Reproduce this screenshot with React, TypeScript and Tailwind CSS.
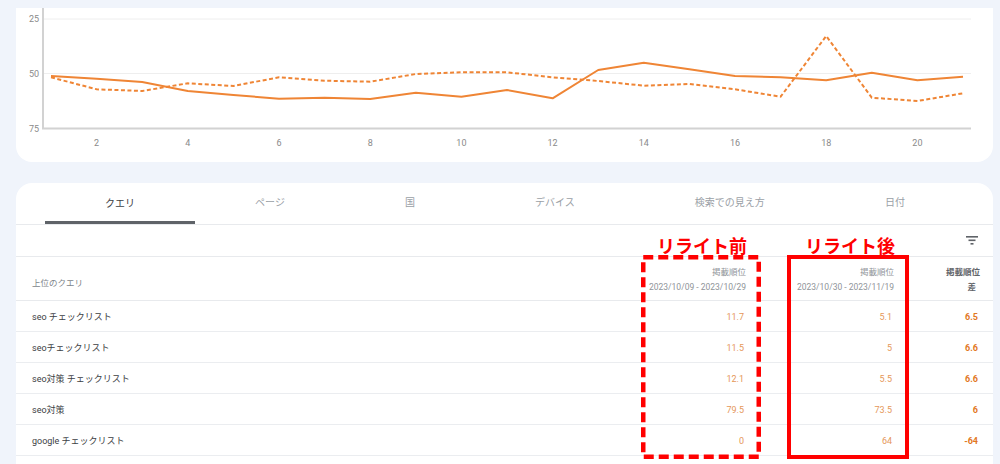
import { useMemo } from "react";

const solid = [76, 78.7, 82, 91, 95, 98.7, 97.7, 99, 92.7, 96.7, 90, 98.3, 70, 62.7, 69.3, 76, 77.3, 80.3, 72.7, 80.3, 76.7];
const dashed = [77.3, 89.3, 91, 83.3, 86, 77.3, 80.7, 81.7, 74, 72.3, 72.3, 77.3, 81, 85.7, 84, 89.3, 96.7, 36, 97.7, 101, 93.3];

const dayX = (i: number) => 51 + i * 45.6;

const tabs = ["クエリ", "ページ", "国", "デバイス", "検索での見え方", "日付"];

const rows = [
  { q: "seo チェックリスト", a: "11.7", b: "5.1", d: "6.5" },
  { q: "seoチェックリスト", a: "11.5", b: "5", d: "6.6" },
  { q: "seo対策 チェックリスト", a: "12.1", b: "5.5", d: "6.6" },
  { q: "seo対策", a: "79.5", b: "73.5", d: "6" },
  { q: "google チェックリスト", a: "0", b: "64", d: "-64" },
];

const Chart = () => {
  const solidPts = useMemo(() => solid.map((y, i) => `${dayX(i)},${y}`).join(" "), []);
  const dashedPts = useMemo(() => dashed.map((y, i) => `${dayX(i)},${y}`).join(" "), []);

  return (
    <svg width={977} height={154} viewBox="16 8 977 154" className="block">
      <line x1={43} y1={19} x2={971} y2={19} stroke="#eeeeee" strokeWidth={1} />
      <line x1={43} y1={73.5} x2={971} y2={73.5} stroke="#eeeeee" strokeWidth={1} />
      <line x1={43} y1={8} x2={43} y2={129} stroke="#d2d2d2" strokeWidth={2} />
      <line x1={42} y1={128.5} x2={971} y2={128.5} stroke="#d2d2d2" strokeWidth={2} />
      <g fontFamily="Roboto, sans-serif" fontSize={9} fill="#8a8a8a">
        <text x={39} y={22} textAnchor="end">25</text>
        <text x={39} y={77} textAnchor="end">50</text>
        <text x={39} y={132} textAnchor="end">75</text>
        {[2, 4, 6, 8, 10, 12, 14, 16, 18, 20].map((d) => (
          <text key={d} x={dayX(d - 1)} y={145.5} textAnchor="middle">
            {d}
          </text>
        ))}
      </g>
      <polyline points={dashedPts} fill="none" stroke="#ef8535" strokeWidth={2} strokeDasharray="4 2.5" />
      <polyline points={solidPts} fill="none" stroke="#ef8535" strokeWidth={2} strokeLinejoin="round" />
    </svg>
  );
};

export default function App() {
  return (
    <div className="relative h-[464px] w-[1000px] overflow-hidden bg-[#f0f4fb] pl-4 pr-[7px] pt-2 font-[Roboto,'Noto_Sans_CJK_JP',sans-serif]">
      {/* Chart card */}
      <div className="h-[154px] rounded-b-2xl bg-white">
        <Chart />
      </div>

      {/* Table card */}
      <div className="mt-[21px] h-[300px] rounded-t-2xl bg-white">
        <div className="flex border-b border-[#e8eaed] pl-[29px] pr-[28px]">
          {tabs.map((t, i) => (
            <div
              key={t}
              className={
                i === 0
                  ? "flex h-[41px] grow items-center justify-center border-b-[3px] border-[#5f6368] pt-[3px] text-[10px] text-[#3c4043]"
                  : "flex h-[41px] grow items-center justify-center pb-[3px] text-[10px] text-[#9aa0a6]"
              }
            >
              {t}
            </div>
          ))}
        </div>

        <div className="flex h-[32px] items-center justify-end border-b border-[#e8eaed] pr-[15px]">
          <svg width={12} height={9} viewBox="0 0 12 9">
            <rect x={0} y={0} width={12} height={1.6} fill="#5f6368" />
            <rect x={2.5} y={3.5} width={7} height={1.6} fill="#5f6368" />
            <rect x={4.5} y={7} width={3} height={1.6} fill="#5f6368" />
          </svg>
        </div>

        <div className="grid h-[44px] grid-cols-[1fr_150px_148px_86px] border-b border-[#e8eaed] pl-4 pr-[13px]">
          <div className="self-center pt-[10px] text-[8.5px] text-[#80868b]">上位のクエリ</div>
          <div className="flex flex-col items-end justify-center gap-[1px] pt-[2px] text-[8.5px] leading-[14px] text-[#8f9499]">
            <span>掲載順位</span>
            <span>2023/10/09 - 2023/10/29</span>
          </div>
          <div className="flex flex-col items-end justify-center gap-[1px] pt-[2px] text-[8.5px] leading-[14px] text-[#8f9499]">
            <span>掲載順位</span>
            <span>2023/10/30 - 2023/11/19</span>
          </div>
          <div className="flex flex-col items-end justify-center gap-[1px] pt-[2px] text-[8.5px] font-bold leading-[14px] text-[#5f6368]">
            <span>掲載順位</span>
            <span className="pr-[4px]">差</span>
          </div>
        </div>

        {rows.map((r) => (
          <div
            key={r.q}
            className="grid h-[31px] grid-cols-[1fr_150px_148px_86px] items-center border-b border-[#ebedf0] pl-4 pr-[15px] pt-[3px] text-[9px]"
          >
            <div className="text-[#3c4043]">{r.q}</div>
            <div className="text-right text-[#e5975a]">{r.a}</div>
            <div className="text-right text-[#e5975a]">{r.b}</div>
            <div className="text-right font-bold text-[#e2781f]">{r.d}</div>
          </div>
        ))}
      </div>

      {/* Annotations */}
      <div className="absolute left-[657px] top-[236px] font-['Noto_Sans_CJK_JP',sans-serif] text-[18px] font-bold leading-[18px] text-[#ff0000]">
        リライト前
      </div>
      <div className="absolute left-[805px] top-[236px] font-['Noto_Sans_CJK_JP',sans-serif] text-[18px] font-bold leading-[18px] text-[#ff0000]">
        リライト後
      </div>
      <svg className="absolute left-[641px] top-[255px]" width={120} height={204} viewBox="0 0 120 204">
        <rect x={2.25} y={2.25} width={115.5} height={199.5} fill="none" stroke="#ff0000" strokeWidth={4.5} strokeDasharray="10 5" />
      </svg>
      <div className="absolute left-[787px] top-[255px] h-[204px] w-[122px] border-[4.5px] border-[#ff0000]" />
    </div>
  );
}
